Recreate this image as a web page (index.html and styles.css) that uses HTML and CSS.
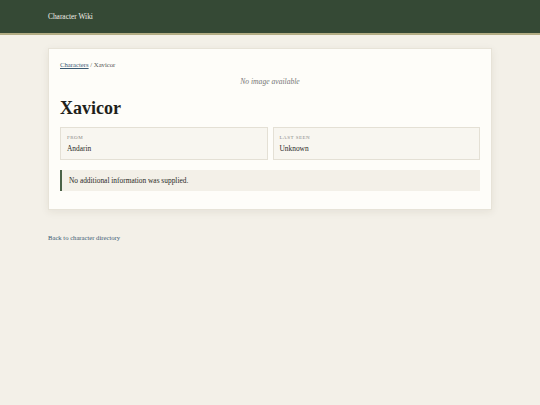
FILE: index.html
```html
<!DOCTYPE html>
<html lang="en">
<head>
<meta charset="utf-8">
<title>Xavicor - Character Wiki</title>
<link rel="stylesheet" href="styles.css">
</head>
<body>
<header class="site-header">
  <div class="wrap"><span class="site-title">Character Wiki</span></div>
</header>
<main class="wrap main">
  <article class="card">
    <nav class="crumbs"><a href="#">Characters</a> / Xavicor</nav>
    <div class="no-image">No image available</div>
    <h1 class="name">Xavicor</h1>
    <div class="facts">
      <div class="fact">
        <div class="fact-label">From</div>
        <div class="fact-value">Andarin</div>
      </div>
      <div class="fact">
        <div class="fact-label">Last seen</div>
        <div class="fact-value">Unknown</div>
      </div>
    </div>
    <div class="notes">No additional information was supplied.</div>
  </article>
  <p class="back"><a href="#">Back to character directory</a></p>
</main>
</body>
</html>
```
FILE: styles.css
```css
html, body {
  margin: 0;
  padding: 0;
}
body {
  background: #f3f0e8;
  color: #2a2a26;
  font-family: "Liberation Serif", "DejaVu Serif", serif;
  font-size: 7.4px;
}
.wrap {
  width: 444px;
  margin: 0 auto;
}
.site-header {
  background: #354935;
  border-bottom: 2px solid #b3ad84;
  height: 33px;
  display: flex;
  align-items: center;
}
.site-title {
  color: #f1efe6;
  font-size: 7.4px;
}
.main {
  padding-top: 13px;
}
.card {
  background: #fefdf9;
  border: 1px solid #e7e3d8;
  box-shadow: 0 2px 8px rgba(60, 50, 20, 0.08);
  padding: 12px 11px 18px;
}
.crumbs {
  font-size: 6.7px;
  color: #555;
  line-height: 8px;
}
.crumbs a {
  color: #3b5a73;
}
.no-image {
  text-align: center;
  font-style: italic;
  color: #777;
  font-size: 7.6px;
  margin-top: 9px;
  line-height: 8px;
}
.name {
  font-size: 18px;
  line-height: 22px;
  margin: 11px 0 8px;
  color: #1f1f1b;
}
.facts {
  display: grid;
  grid-template-columns: 1fr 1fr;
  gap: 5px;
}
.fact {
  background: #f8f6f0;
  border: 1px solid #e4e0d5;
  padding: 7px 6px 5px;
  height: 19px;
}
.fact-label {
  text-transform: uppercase;
  font-size: 5px;
  letter-spacing: 0.5px;
  color: #888;
  line-height: 6px;
}
.fact-value {
  font-size: 7.4px;
  margin-top: 3px;
  line-height: 9px;
}
.notes {
  margin-top: 10px;
  background: #f3f0e8;
  border-left: 2px solid #4a6247;
  padding: 6px 7px;
  line-height: 9px;
  font-size: 7.4px;
}
.back {
  margin: 24px 0 0;
  font-size: 6.65px;
}
.back a {
  color: #3b5a73;
  text-decoration: underline;
}
```
